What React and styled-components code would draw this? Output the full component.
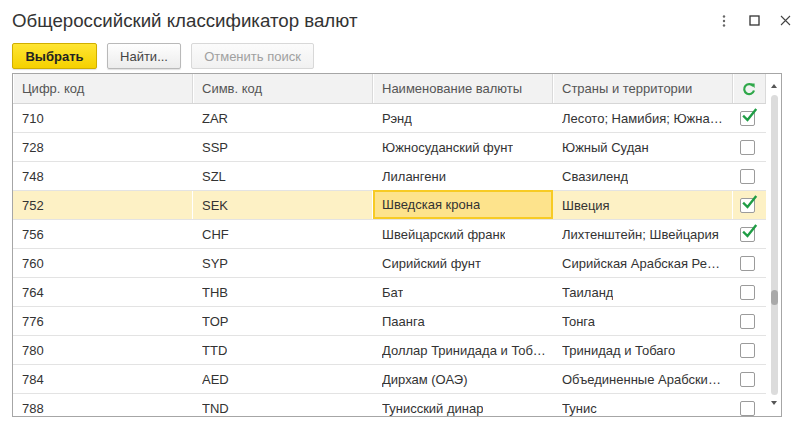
import React from "react";
import styled, { createGlobalStyle } from "styled-components";

const Global = createGlobalStyle`
  html, body { margin: 0; padding: 0; background: #fff; }
  body { font-family: "Liberation Sans", Arial, sans-serif; color: #333; }
`;

const Window = styled.div`
  width: 801px;
  height: 428px;
  box-sizing: border-box;
  padding: 0 12px 0 12px;
  display: flex;
  flex-direction: column;
  overflow: hidden;
`;

const TitleBar = styled.div`
  height: 41px;
  display: flex;
  align-items: center;
  justify-content: space-between;
`;

const Title = styled.h1`
  margin: 0;
  font-size: 18.7px;
  font-weight: normal;
  color: #333;
  padding-top: 1px;
`;

const WinButtons = styled.div`
  display: flex;
  align-items: center;
  margin-right: -12px;
`;

const WinBtn = styled.div`
  width: 31px;
  height: 24px;
  display: flex;
  align-items: center;
  justify-content: center;
`;

const Toolbar = styled.div`
  display: flex;
  gap: 10px;
  height: 26px;
  margin-top: 2px;
  margin-bottom: 4px;
`;

const Button = styled.button`
  height: 26px;
  box-sizing: border-box;
  padding: 0;
  font-family: "Liberation Sans", Arial, sans-serif;
  font-size: 13px;
  border-radius: 2px;
  border: 1px solid ${(p) => (p.$primary ? "#d0ae00" : p.$disabled ? "#d8d8d8" : "#b9b9b9")};
  background: ${(p) =>
    p.$primary
      ? "linear-gradient(#ffe533, #f5d100)"
      : p.$disabled
      ? "linear-gradient(#fbfbfb, #f1f1f1)"
      : "linear-gradient(#fefefe, #ececec)"};
  color: ${(p) => (p.$primary ? "#222" : p.$disabled ? "#a0a0a0" : "#444")};
  font-weight: ${(p) => (p.$primary ? "bold" : "normal")};
  width: ${(p) => p.$w}px;
  box-shadow: ${(p) => (p.$disabled ? "none" : "0 1px 1px rgba(0,0,0,0.12)")};
`;

const Frame = styled.div`
  width: 770px;
  height: 344px;
  box-sizing: border-box;
  border: 1px solid #a6a6a6;
  display: flex;
  overflow: hidden;
`;

const Grid = styled.div`
  width: 753px;
  display: flex;
  flex-direction: column;
`;

const COLS = "180px 180px 180px 180px 33px";

const HeadRow = styled.div`
  display: grid;
  grid-template-columns: ${COLS};
  height: 30px;
  box-sizing: border-box;
  background: #f2f2f2;
  border-bottom: 1px solid #d6d6d6;
  flex-shrink: 0;
`;

const HeadCell = styled.div`
  display: flex;
  align-items: center;
  justify-content: ${(p) => (p.$center ? "center" : "flex-start")};
  padding-left: ${(p) => (p.$center ? 0 : 9)}px;
  font-size: 13px;
  color: #555;
  border-right: 1px solid #dadada;
  box-shadow: inset 1px 0 0 #fff;
  white-space: nowrap;
  overflow: hidden;
`;

const Row = styled.div`
  display: grid;
  grid-template-columns: ${COLS};
  height: 29px;
  box-sizing: border-box;
  border-bottom: 1px solid #e3e3e3;
  background: ${(p) => (p.$selected ? "#fdf1c5" : "#fff")};
  flex-shrink: 0;
`;

const Cell = styled.div`
  display: flex;
  align-items: center;
  justify-content: ${(p) => (p.$center ? "center" : "flex-start")};
  padding-left: ${(p) => (p.$center ? 0 : p.$current ? 7 : 9)}px;
  padding-right: 6px;
  font-size: 13px;
  color: #333;
  border-right: 1px solid ${(p) => (p.$selected ? "#fff" : "transparent")};
  white-space: nowrap;
  overflow: ${(p) => (p.$center ? "visible" : "hidden")};
  min-width: 0;
  box-sizing: border-box;
  ${(p) =>
    p.$current &&
    `border: 2px solid #f7cb24; background: #fde38c; margin-top: -1px;`}
`;

const CellText = styled.span`
  overflow: hidden;
  text-overflow: ellipsis;
  white-space: nowrap;
`;

const Box = styled.div`
  width: 15px;
  height: 15px;
  box-sizing: border-box;
  border: 1px solid #9b9b9b;
  border-radius: 2px;
  background: #fff;
  position: relative;
  margin-left: 2px;
  margin-top: 1px;
`;

const CheckMark = styled.svg`
  position: absolute;
  left: 1px;
  top: -4px;
  overflow: visible;
`;

const Scroll = styled.div`
  width: 15px;
  display: flex;
  flex-direction: column;
  align-items: center;
  padding-top: 10px;
  box-sizing: border-box;
`;

const Arrow = styled.div`
  width: 0;
  height: 0;
  border-left: 3.5px solid transparent;
  border-right: 3.5px solid transparent;
  ${(p) =>
    p.$down
      ? "border-top: 4px solid #555;"
      : "border-bottom: 4px solid #555;"}
`;

const Track = styled.div`
  width: 7px;
  height: 300px;
  margin: 7px 0 6px 1px;
  background: #dcdcdc;
  border-radius: 4px;
  position: relative;
`;

const Thumb = styled.div`
  position: absolute;
  left: 0;
  top: 195px;
  width: 7px;
  height: 15px;
  border-radius: 4px;
  background: #a9a9a9;
`;

const rows = [
  ["710", "ZAR", "Рэнд", "Лесото; Намибия; Южная Африка", true],
  ["728", "SSP", "Южносуданский фунт", "Южный Судан", false],
  ["748", "SZL", "Лилангени", "Свазиленд", false],
  ["752", "SEK", "Шведская крона", "Швеция", true, true],
  ["756", "CHF", "Швейцарский франк", "Лихтенштейн; Швейцария", true],
  ["760", "SYP", "Сирийский фунт", "Сирийская Арабская Республика", false],
  ["764", "THB", "Бат", "Таиланд", false],
  ["776", "TOP", "Паанга", "Тонга", false],
  ["780", "TTD", "Доллар Тринидада и Тобаго", "Тринидад и Тобаго", false],
  ["784", "AED", "Дирхам (ОАЭ)", "Объединенные Арабские Эмираты", false],
  ["788", "TND", "Тунисский динар", "Тунис", false],
];

function Check({ on }) {
  return (
    <Box>
      {on && (
        <CheckMark width="15" height="15" viewBox="0 0 15 15">
          <path d="M2 8.5 L5.5 12 L13.5 2" fill="none" stroke="#1f9d45" strokeWidth="2.4" strokeLinecap="square" />
        </CheckMark>
      )}
    </Box>
  );
}

function Refresh() {
  return (
    <svg width="14" height="14" viewBox="0 0 14 14">
      <path d="M11.3 4.2 A5 5 0 1 0 12 8.5" fill="none" stroke="#2fa84a" strokeWidth="2.2" />
      <path d="M8.2 1.6 L12.6 1.6 L12.6 6 Z" fill="#2fa84a" />
    </svg>
  );
}

export default function App() {
  return (
    <>
      <Global />
      <Window>
        <TitleBar>
          <Title>Общероссийский классификатор валют</Title>
          <WinButtons>
            <WinBtn>
              <svg width="4" height="12" viewBox="0 0 4 12">
                <circle cx="2" cy="1.5" r="1.2" fill="#666" />
                <circle cx="2" cy="6" r="1.2" fill="#666" />
                <circle cx="2" cy="10.5" r="1.2" fill="#666" />
              </svg>
            </WinBtn>
            <WinBtn>
              <svg width="11" height="11" viewBox="0 0 11 11">
                <rect x="1" y="1" width="9" height="9" fill="none" stroke="#333" strokeWidth="1.3" />
              </svg>
            </WinBtn>
            <WinBtn>
              <svg width="11" height="11" viewBox="0 0 11 11">
                <path d="M1 1 L10 10 M10 1 L1 10" stroke="#444" strokeWidth="1.1" />
              </svg>
            </WinBtn>
          </WinButtons>
        </TitleBar>
        <Toolbar>
          <Button $primary $w={85}>Выбрать</Button>
          <Button $w={74}>Найти...</Button>
          <Button $disabled $w={123}>Отменить поиск</Button>
        </Toolbar>
        <Frame>
          <Grid>
            <HeadRow>
              <HeadCell>Цифр. код</HeadCell>
              <HeadCell>Симв. код</HeadCell>
              <HeadCell>Наименование валюты</HeadCell>
              <HeadCell>Страны и территории</HeadCell>
              <HeadCell $center>
                <Refresh />
              </HeadCell>
            </HeadRow>
            {rows.map(([num, sym, name, country, on, sel]) => (
              <Row key={num} $selected={sel}>
                <Cell $selected={sel}><CellText>{num}</CellText></Cell>
                <Cell $selected={sel}><CellText>{sym}</CellText></Cell>
                <Cell $selected={sel} $current={sel}><CellText>{name}</CellText></Cell>
                <Cell $selected={sel}><CellText>{country}</CellText></Cell>
                <Cell $center>
                  <Check on={on} />
                </Cell>
              </Row>
            ))}
          </Grid>
          <Scroll>
            <Arrow />
            <Track>
              <Thumb />
            </Track>
            <Arrow $down />
          </Scroll>
        </Frame>
      </Window>
    </>
  );
}
